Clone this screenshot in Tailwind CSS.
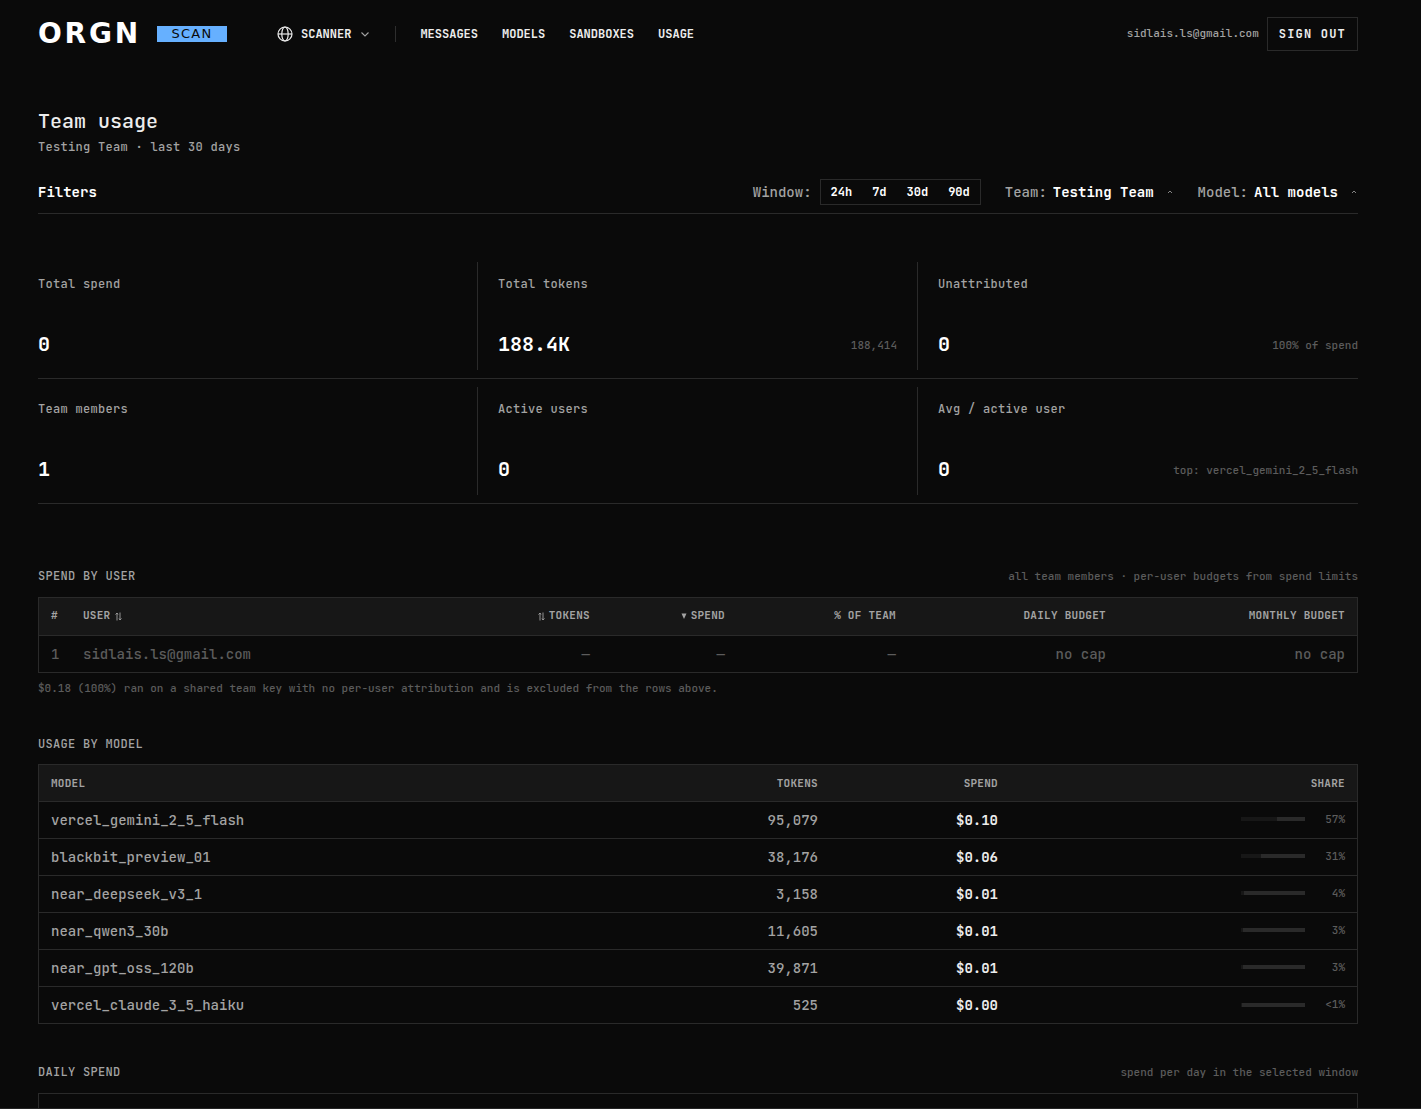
<!DOCTYPE html>
<html lang="en">

<head>
  <meta charset="utf-8">
  <title>Team usage | ORGN Scan</title>
  <meta name="viewport" content="width=device-width,initial-scale=1">
  <script src="https://cdn.jsdelivr.net/npm/@tailwindcss/browser@4"></script>
</head>

<body class="flex h-screen flex-col overflow-hidden border-b border-[#242424] bg-[#0a0a0a] pr-[63px] pl-[38px] font-['JetBrains_Mono','DejaVu_Sans_Mono',monospace] text-sm font-medium text-[#a3a3a3]">

  <header class="flex h-[68px] shrink-0 items-center justify-between">
    <div class="flex items-center">
      <a href="#" class="mr-[50px] flex w-[189px] items-center justify-between">
        <span class="font-['DejaVu_Sans',sans-serif] text-[28px] leading-4 font-bold tracking-widest text-white">ORGN</span>
        <span class="flex h-4 w-[70px] items-center justify-center bg-[#66b0ff] font-['DejaVu_Sans',sans-serif] text-[13px] leading-4 font-normal tracking-widest text-[#0a0a0a]">SCAN</span>
      </a>
      <nav class="flex items-center gap-6 text-xs font-bold text-[#ededed]">
        <button type="button" class="flex items-center gap-2">
          <svg class="size-4" viewBox="0 0 16 16" fill="none" stroke="currentColor" stroke-width="1.2">
            <circle cx="8" cy="8" r="7" />
            <ellipse cx="8" cy="8" rx="3.2" ry="7" />
            <path d="M1 8h14" />
          </svg>
          SCANNER
          <svg class="size-3" viewBox="0 0 12 12" fill="none" stroke="#a3a3a3" stroke-width="1.1">
            <path d="M2.5 4.5 6 8l3.5-3.5" />
          </svg>
        </button>
        <span class="h-4 w-px bg-[#2e2e2e]"></span>
        <a href="#">MESSAGES</a>
        <a href="#">MODELS</a>
        <a href="#">SANDBOXES</a>
        <a href="#">USAGE</a>
      </nav>
    </div>
    <div class="flex items-center gap-2">
      <span class="text-[11px]">sidlais.ls@gmail.com</span>
      <button type="button" class="h-[34px] border border-[#2a2a2a] px-[11px] text-xs font-bold tracking-widest text-[#ededed]">SIGN OUT</button>
    </div>
  </header>

  <main class="flex min-h-0 flex-1 flex-col pt-[39px]">
    <h1 class="text-xl leading-7 font-medium text-[#ededed]">Team usage</h1>
    <p class="mt-1 text-xs tracking-wide">Testing Team · last 30 days</p>

    <div class="mt-6 flex items-center justify-between border-b border-[#2a2a2a] pb-2">
      <h2 class="font-semibold text-white">Filters</h2>
      <div class="flex items-center gap-6">
        <div class="flex items-center gap-2">
          <span>Window:</span>
          <div class="flex h-[26px] border border-[#2a2a2a] text-xs font-bold text-white">
            <button type="button" class="px-[10px]">24h</button>
            <button type="button" class="px-[10px]">7d</button>
            <button type="button" class="px-[10px]">30d</button>
            <button type="button" class="px-[10px]">90d</button>
          </div>
        </div>
        <div class="flex items-center gap-[6px]">
          <label for="team">Team:</label>
          <div class="relative flex items-center">
            <select id="team" class="field-sizing-content appearance-none bg-transparent pr-5 font-semibold text-white">
              <option>Testing Team</option>
            </select>
            <svg class="pointer-events-none absolute right-0 size-2" viewBox="0 0 8 8" fill="none" stroke="#a3a3a3" stroke-width="0.8">
              <path d="M2 5l2-2 2 2" />
            </svg>
          </div>
        </div>
        <div class="flex items-center gap-[6px]">
          <label for="model">Model:</label>
          <div class="relative flex items-center">
            <select id="model" class="field-sizing-content appearance-none bg-transparent pr-5 font-semibold text-white">
              <option>All models</option>
            </select>
            <svg class="pointer-events-none absolute right-0 size-2" viewBox="0 0 8 8" fill="none" stroke="#a3a3a3" stroke-width="0.8">
              <path d="M2 5l2-2 2 2" />
            </svg>
          </div>
        </div>
      </div>
    </div>

    <section class="mt-10">
      <div class="grid grid-cols-3 border-b border-[#2a2a2a] py-2">
        <div class="flex h-[108px] flex-col justify-between border-r border-[#2a2a2a] pt-[14px] pr-5 pb-3">
          <span class="text-xs tracking-wide">Total spend</span>
          <span class="text-xl leading-7 font-semibold text-white">0</span>
        </div>
        <div class="flex h-[108px] flex-col justify-between border-r border-[#2a2a2a] px-5 pt-[14px] pb-3">
          <span class="text-xs tracking-wide">Total tokens</span>
          <div class="flex items-center justify-between">
            <span class="text-xl leading-7 font-semibold text-white">188.4K</span>
            <span class="pt-1 text-[11px] text-[#5c5c5c]">188,414</span>
          </div>
        </div>
        <div class="flex h-[108px] flex-col justify-between pt-[14px] pb-3 pl-5">
          <span class="text-xs tracking-wide">Unattributed</span>
          <div class="flex items-center justify-between">
            <span class="text-xl leading-7 font-semibold text-white">0</span>
            <span class="pt-1 text-[11px] text-[#5c5c5c]">100% of spend</span>
          </div>
        </div>
      </div>
      <div class="grid grid-cols-3 border-b border-[#2a2a2a] py-2">
        <div class="flex h-[108px] flex-col justify-between border-r border-[#2a2a2a] pt-[14px] pr-5 pb-3">
          <span class="text-xs tracking-wide">Team members</span>
          <span class="text-xl leading-7 font-semibold text-white">1</span>
        </div>
        <div class="flex h-[108px] flex-col justify-between border-r border-[#2a2a2a] px-5 pt-[14px] pb-3">
          <span class="text-xs tracking-wide">Active users</span>
          <span class="text-xl leading-7 font-semibold text-white">0</span>
        </div>
        <div class="flex h-[108px] flex-col justify-between pt-[14px] pb-3 pl-5">
          <span class="text-xs tracking-wide">Avg / active user</span>
          <div class="flex items-center justify-between">
            <span class="text-xl leading-7 font-semibold text-white">0</span>
            <span class="pt-1 text-[11px] text-[#5c5c5c]">top: vercel_gemini_2_5_flash</span>
          </div>
        </div>
      </div>
    </section>

    <section class="mt-16">
      <div class="flex h-[17px] items-start justify-between">
        <h2 class="text-xs font-medium tracking-wide">SPEND BY USER</h2>
        <span class="text-[11px] leading-[17px] text-[#5c5c5c]">all team members · per-user budgets from spend limits</span>
      </div>
      <div class="mt-3 border border-[#2a2a2a]">
        <table class="w-full table-fixed">
          <thead class="bg-[#171717] text-[11px] tracking-wide">
            <tr class="h-[37px] border-b border-[#2a2a2a]">
              <th class="w-8 pl-3 text-left font-semibold">#</th>
              <th class="px-3 text-left font-semibold">
                <button type="button" class="flex items-center gap-1 tracking-wide">USER
                  <svg class="h-[9px] w-[7px]" viewBox="0 0 7 9" fill="none" stroke="currentColor" stroke-width="0.9"><path d="M.5 2.500 2 1l1 1.500M2 1v7.500M4 6.500l1 1.500 1.500-1.500M5 8V.5" /></svg>
                </button>
              </th>
              <th class="w-[135px] px-3 font-semibold">
                <button type="button" class="ml-auto flex items-center gap-1 tracking-wide">
                  <svg class="h-[9px] w-[7px]" viewBox="0 0 7 9" fill="none" stroke="currentColor" stroke-width="0.9"><path d="M.5 2.500 2 1l1 1.500M2 1v7.500M4 6.500l1 1.500 1.500-1.500M5 8V.5" /></svg>
                  TOKENS</button>
              </th>
              <th class="w-[135px] px-3 font-semibold">
                <button type="button" class="ml-auto flex items-center gap-1 tracking-wide">
                  <svg class="h-2 w-[6px]" viewBox="0 0 6 8" fill="currentColor"><path d="M.5 1.500h5L3 7z" /></svg>
                  SPEND</button>
              </th>
              <th class="w-[171px] px-3 text-right font-semibold">% OF TEAM</th>
              <th class="w-[210px] px-3 text-right font-semibold">DAILY BUDGET</th>
              <th class="w-[239px] px-3 text-right font-semibold">MONTHLY BUDGET</th>
            </tr>
          </thead>
          <tbody class="text-[#5c5c5c]">
            <tr class="h-[37px]">
              <td class="pl-3">1</td>
              <td class="px-3">sidlais.ls@gmail.com</td>
              <td class="px-3 text-right">—</td>
              <td class="px-3 text-right">—</td>
              <td class="px-3 text-right">—</td>
              <td class="px-3 text-right">no cap</td>
              <td class="px-3 text-right">no cap</td>
            </tr>
          </tbody>
        </table>
      </div>
      <p class="mt-[7px] text-[11px] leading-4 text-[#5c5c5c]">$0.18 (100%) ran on a shared team key with no per-user attribution and is excluded from the rows above.</p>
    </section>

    <section class="mt-10">
      <h2 class="text-xs font-medium tracking-wide">USAGE BY MODEL</h2>
      <div class="mt-3 border border-[#2a2a2a]">
        <table class="w-full table-fixed">
          <thead class="bg-[#171717] text-[11px] tracking-wide">
            <tr class="h-9 border-b border-[#2a2a2a]">
              <th class="px-3 pt-[2px] text-left font-semibold">MODEL</th>
              <th class="w-[180px] px-3 pt-[2px] text-right font-semibold">TOKENS</th>
              <th class="w-[180px] px-3 pt-[2px] text-right font-semibold">SPEND</th>
              <th class="w-[347px] px-3 pt-[2px] text-right font-semibold">SHARE</th>
            </tr>
          </thead>
          <tbody>
            <tr class="h-[37px] border-b border-[#2a2a2a]">
              <td class="px-3">vercel_gemini_2_5_flash</td>
              <td class="px-3 text-right">95,079</td>
              <td class="px-3 text-right font-bold text-[#ededed]">$0.10</td>
              <td class="px-3">
                <div class="flex items-center justify-end gap-2">
                  <div class="h-1 w-16 bg-[#2a2a2a]"><div class="h-1 bg-[#171717]" style="width: 57%"></div></div>
                  <span class="w-8 text-right text-[11px] text-[#5c5c5c]">57%</span>
                </div>
              </td>
            </tr>
            <tr class="h-[37px] border-b border-[#2a2a2a]">
              <td class="px-3">blackbit_preview_01</td>
              <td class="px-3 text-right">38,176</td>
              <td class="px-3 text-right font-bold text-[#ededed]">$0.06</td>
              <td class="px-3">
                <div class="flex items-center justify-end gap-2">
                  <div class="h-1 w-16 bg-[#2a2a2a]"><div class="h-1 bg-[#171717]" style="width: 31%"></div></div>
                  <span class="w-8 text-right text-[11px] text-[#5c5c5c]">31%</span>
                </div>
              </td>
            </tr>
            <tr class="h-[37px] border-b border-[#2a2a2a]">
              <td class="px-3">near_deepseek_v3_1</td>
              <td class="px-3 text-right">3,158</td>
              <td class="px-3 text-right font-bold text-[#ededed]">$0.01</td>
              <td class="px-3">
                <div class="flex items-center justify-end gap-2">
                  <div class="h-1 w-16 bg-[#2a2a2a]"><div class="h-1 bg-[#171717]" style="width: 4%"></div></div>
                  <span class="w-8 text-right text-[11px] text-[#5c5c5c]">4%</span>
                </div>
              </td>
            </tr>
            <tr class="h-[37px] border-b border-[#2a2a2a]">
              <td class="px-3">near_qwen3_30b</td>
              <td class="px-3 text-right">11,605</td>
              <td class="px-3 text-right font-bold text-[#ededed]">$0.01</td>
              <td class="px-3">
                <div class="flex items-center justify-end gap-2">
                  <div class="h-1 w-16 bg-[#2a2a2a]"><div class="h-1 bg-[#171717]" style="width: 3%"></div></div>
                  <span class="w-8 text-right text-[11px] text-[#5c5c5c]">3%</span>
                </div>
              </td>
            </tr>
            <tr class="h-[37px] border-b border-[#2a2a2a]">
              <td class="px-3">near_gpt_oss_120b</td>
              <td class="px-3 text-right">39,871</td>
              <td class="px-3 text-right font-bold text-[#ededed]">$0.01</td>
              <td class="px-3">
                <div class="flex items-center justify-end gap-2">
                  <div class="h-1 w-16 bg-[#2a2a2a]"><div class="h-1 bg-[#171717]" style="width: 3%"></div></div>
                  <span class="w-8 text-right text-[11px] text-[#5c5c5c]">3%</span>
                </div>
              </td>
            </tr>
            <tr class="h-[37px]">
              <td class="px-3">vercel_claude_3_5_haiku</td>
              <td class="px-3 text-right">525</td>
              <td class="px-3 text-right font-bold text-[#ededed]">$0.00</td>
              <td class="px-3">
                <div class="flex items-center justify-end gap-2">
                  <div class="h-1 w-16 bg-[#2a2a2a]"><div class="h-1 bg-[#171717]" style="width: 1%"></div></div>
                  <span class="w-8 text-right text-[11px] text-[#5c5c5c]">&lt;1%</span>
                </div>
              </td>
            </tr>
          </tbody>
        </table>
      </div>
    </section>

    <section class="mt-10 flex flex-1 flex-col">
      <div class="flex h-[17px] items-start justify-between">
        <h2 class="text-xs font-medium tracking-wide">DAILY SPEND</h2>
        <span class="text-[11px] leading-[17px] text-[#5c5c5c]">spend per day in the selected window</span>
      </div>
      <div class="mt-3 flex-1 border border-b-0 border-[#2a2a2a]"></div>
    </section>
  </main>
</body>

</html>
